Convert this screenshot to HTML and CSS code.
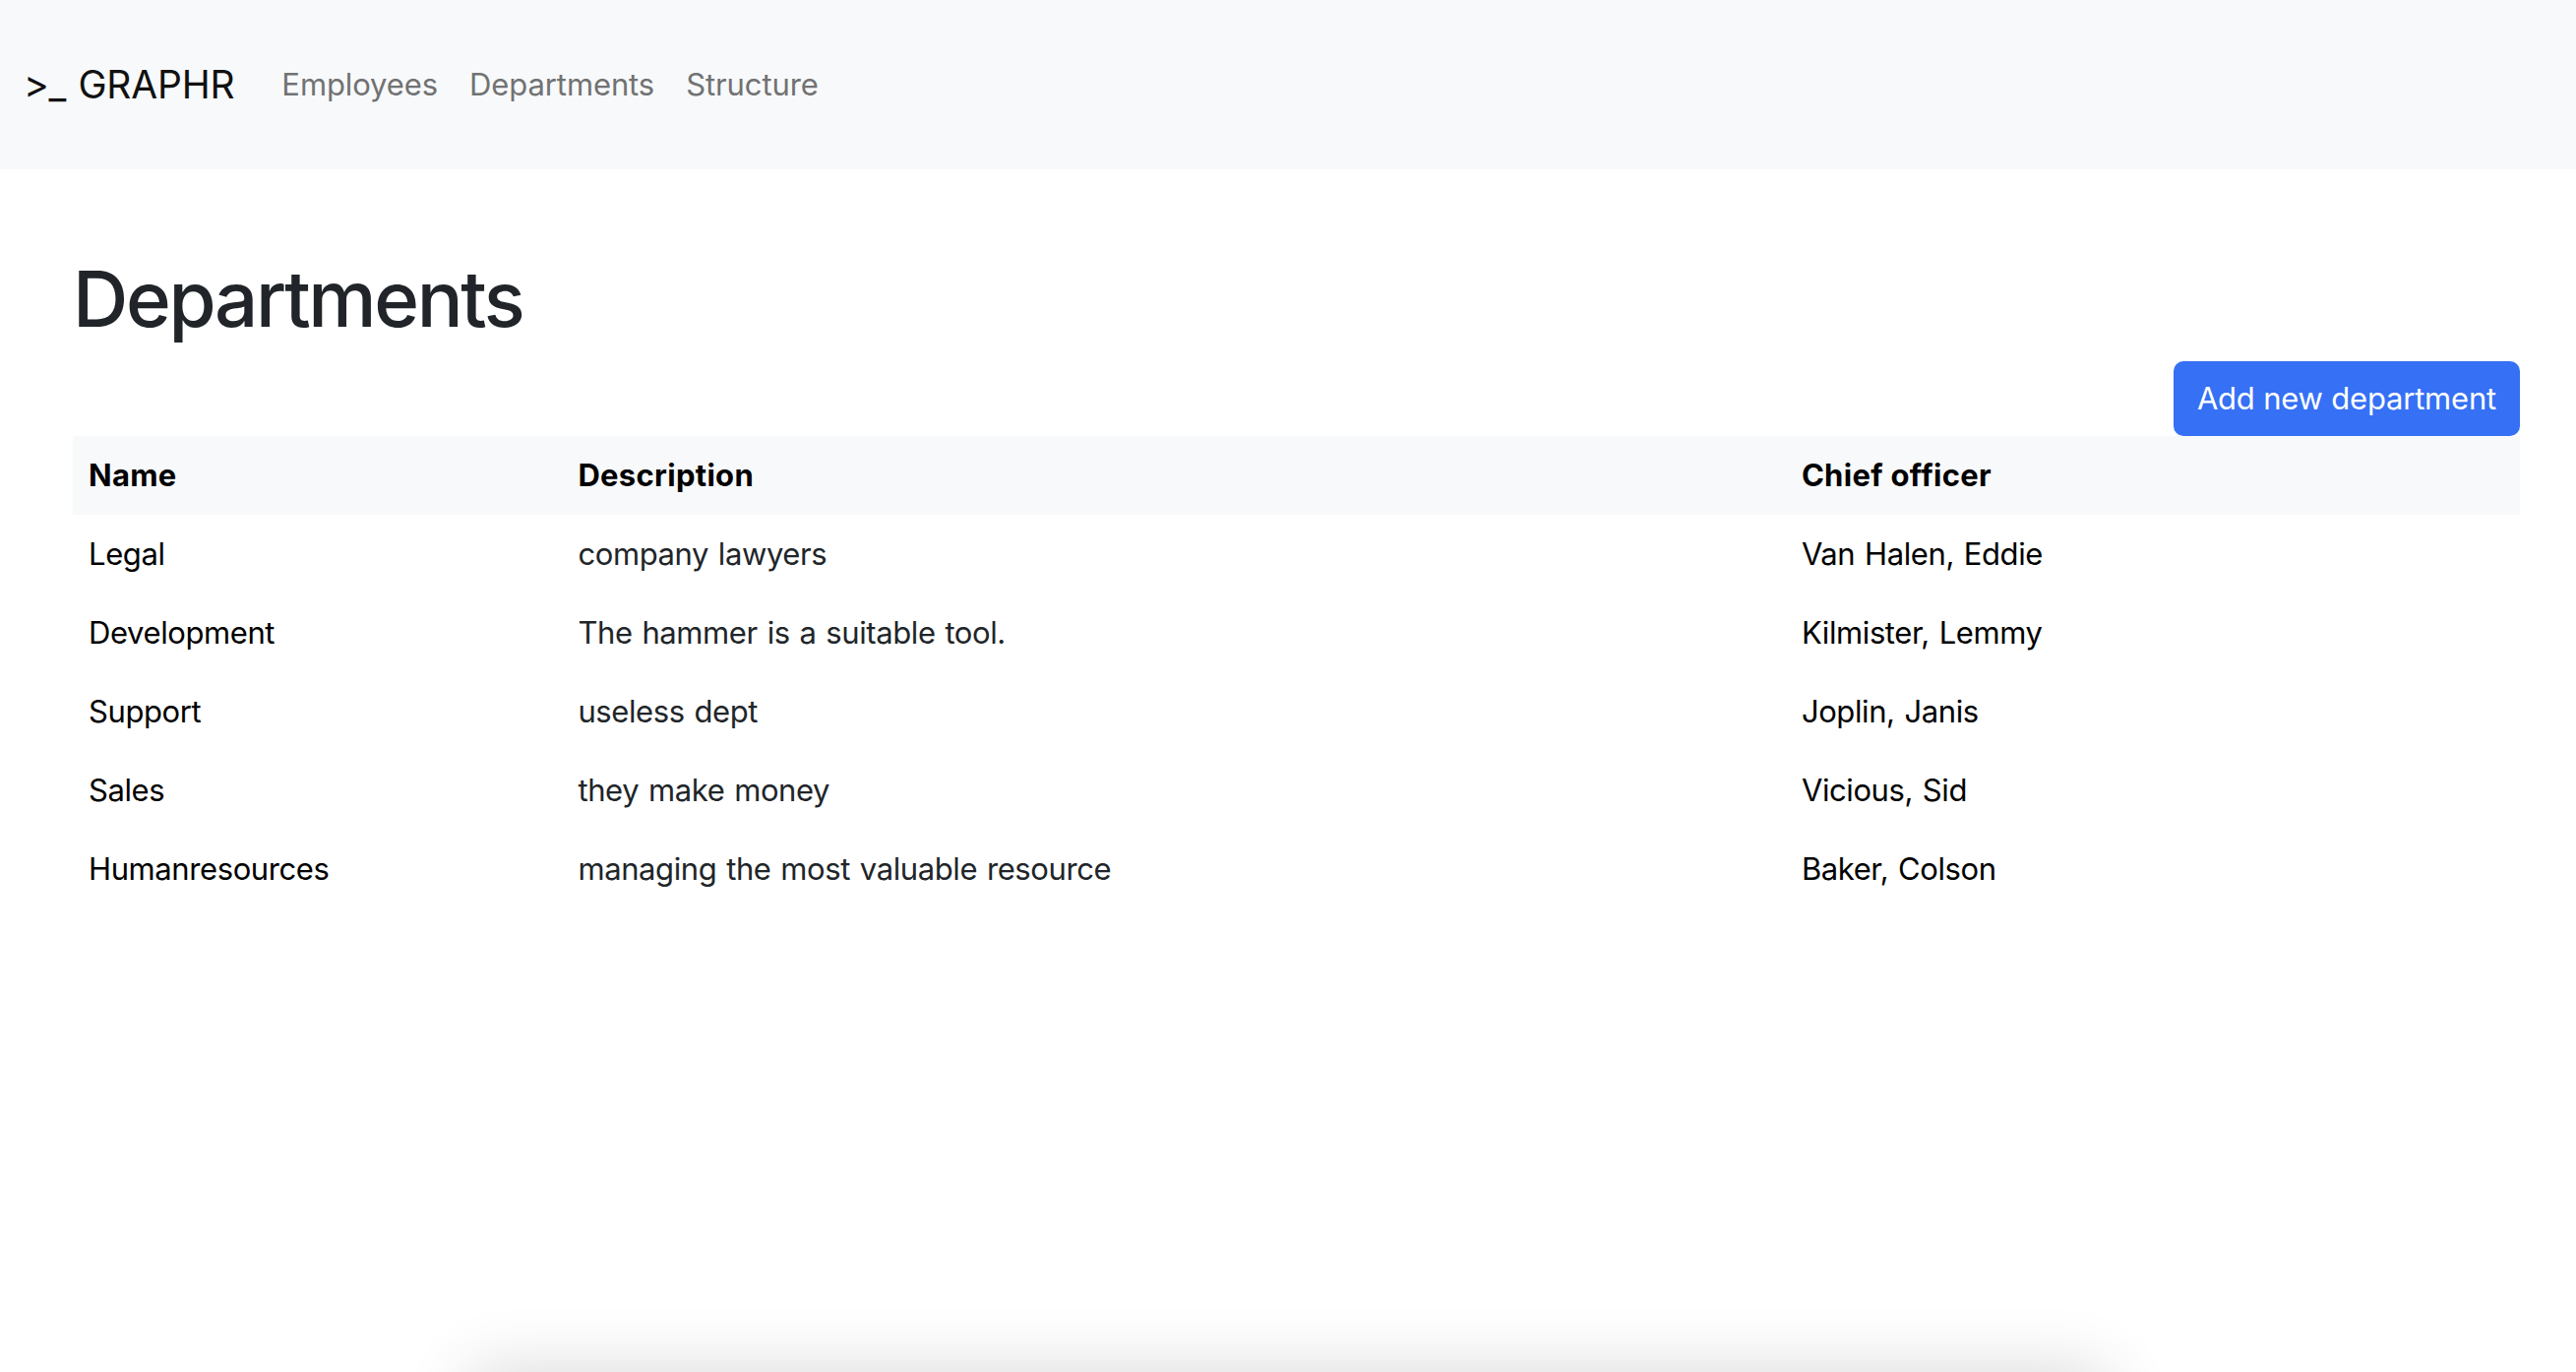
FILE: index.html
```html
<!DOCTYPE html>
<html lang="en">
<head>
<meta charset="utf-8">
<title>GRAPHR - Departments</title>
<link rel="stylesheet" href="styles.css">
</head>
<body>
<nav class="navbar">
  <a class="brand" href="#">&gt;_ GRAPHR</a>
  <a class="nav-link" href="#">Employees</a>
  <a class="nav-link" href="#">Departments</a>
  <a class="nav-link" href="#">Structure</a>
</nav>
<main class="content">
  <h1 class="title">Departments</h1>
  <div class="actions">
    <button class="btn-primary" type="button">Add new department</button>
  </div>
  <table class="table">
    <colgroup>
      <col class="col-name">
      <col class="col-desc">
      <col class="col-chief">
    </colgroup>
    <thead>
      <tr><th>Name</th><th>Description</th><th>Chief officer</th></tr>
    </thead>
    <tbody>
      <tr><td class="strong">Legal</td><td>company lawyers</td><td class="strong">Van Halen, Eddie</td></tr>
      <tr><td class="strong">Development</td><td>The hammer is a suitable tool.</td><td class="strong">Kilmister, Lemmy</td></tr>
      <tr><td class="strong">Support</td><td>useless dept</td><td class="strong">Joplin, Janis</td></tr>
      <tr><td class="strong">Sales</td><td>they make money</td><td class="strong">Vicious, Sid</td></tr>
      <tr><td class="strong">Humanresources</td><td>managing the most valuable resource</td><td class="strong">Baker, Colson</td></tr>
    </tbody>
  </table>
</main>
<div class="offscreen-panel"></div>
</body>
</html>
```

FILE: styles.css
```css
* { box-sizing: border-box; }
html, body { margin: 0; padding: 0; }
body {
  font-family: Inter, "Noto Sans", sans-serif;
  font-size: 31px;
  line-height: 1.5;
  letter-spacing: -0.4px;
  word-spacing: 1.5px;
  color: #212529;
  background: #fff;
}
a { text-decoration: none; }

.navbar {
  display: flex;
  align-items: center;
  height: 172px;
  padding: 0 24px;
  background: #f8f9fa;
}
.brand {
  font-size: 39px;
  line-height: 60px;
  letter-spacing: -0.2px;
  color: #111;
  margin-right: 32px;
}
.nav-link {
  font-size: 31px;
  line-height: 48px;
  letter-spacing: -0.1px;
  padding: 0 16px;
  color: #717273;
}

.content {
  padding: 0 57px 0 74px;
}
.title {
  margin: 84px 0 15px;
  font-size: 78px;
  line-height: 96px;
  font-weight: 500;
  letter-spacing: -2.35px;
  color: #212529;
}
.actions {
  display: flex;
  justify-content: flex-end;
}
.btn-primary {
  height: 76px;
  padding: 0 24px;
  font-family: inherit;
  font-size: 31px;
  line-height: 48px;
  letter-spacing: -0.2px;
  word-spacing: 0;
  color: #fff;
  background: #3570f5;
  border: none;
  border-radius: 10px;
}

.table {
  width: 100%;
  border-collapse: collapse;
  table-layout: fixed;
}
.col-name { width: 20%; }
.col-desc { width: 50%; }
.col-chief { width: 30%; }
.table thead tr { background: #f8f9fa; }
.table th, .table td {
  padding: 16px;
  line-height: 48px;
  text-align: left;
  vertical-align: top;
}
.table th { font-weight: 700; color: #000; letter-spacing: 0.3px; word-spacing: 0; }
.table td { color: #212529; }
.table td.strong { color: #000; }

.offscreen-panel {
  position: fixed;
  top: 100vh;
  left: 50%;
  width: 1660px;
  height: 300px;
  margin-left: -830px;
  background: #fff;
  box-shadow: 0 0 64px rgba(0, 0, 0, 0.16);
}
```
